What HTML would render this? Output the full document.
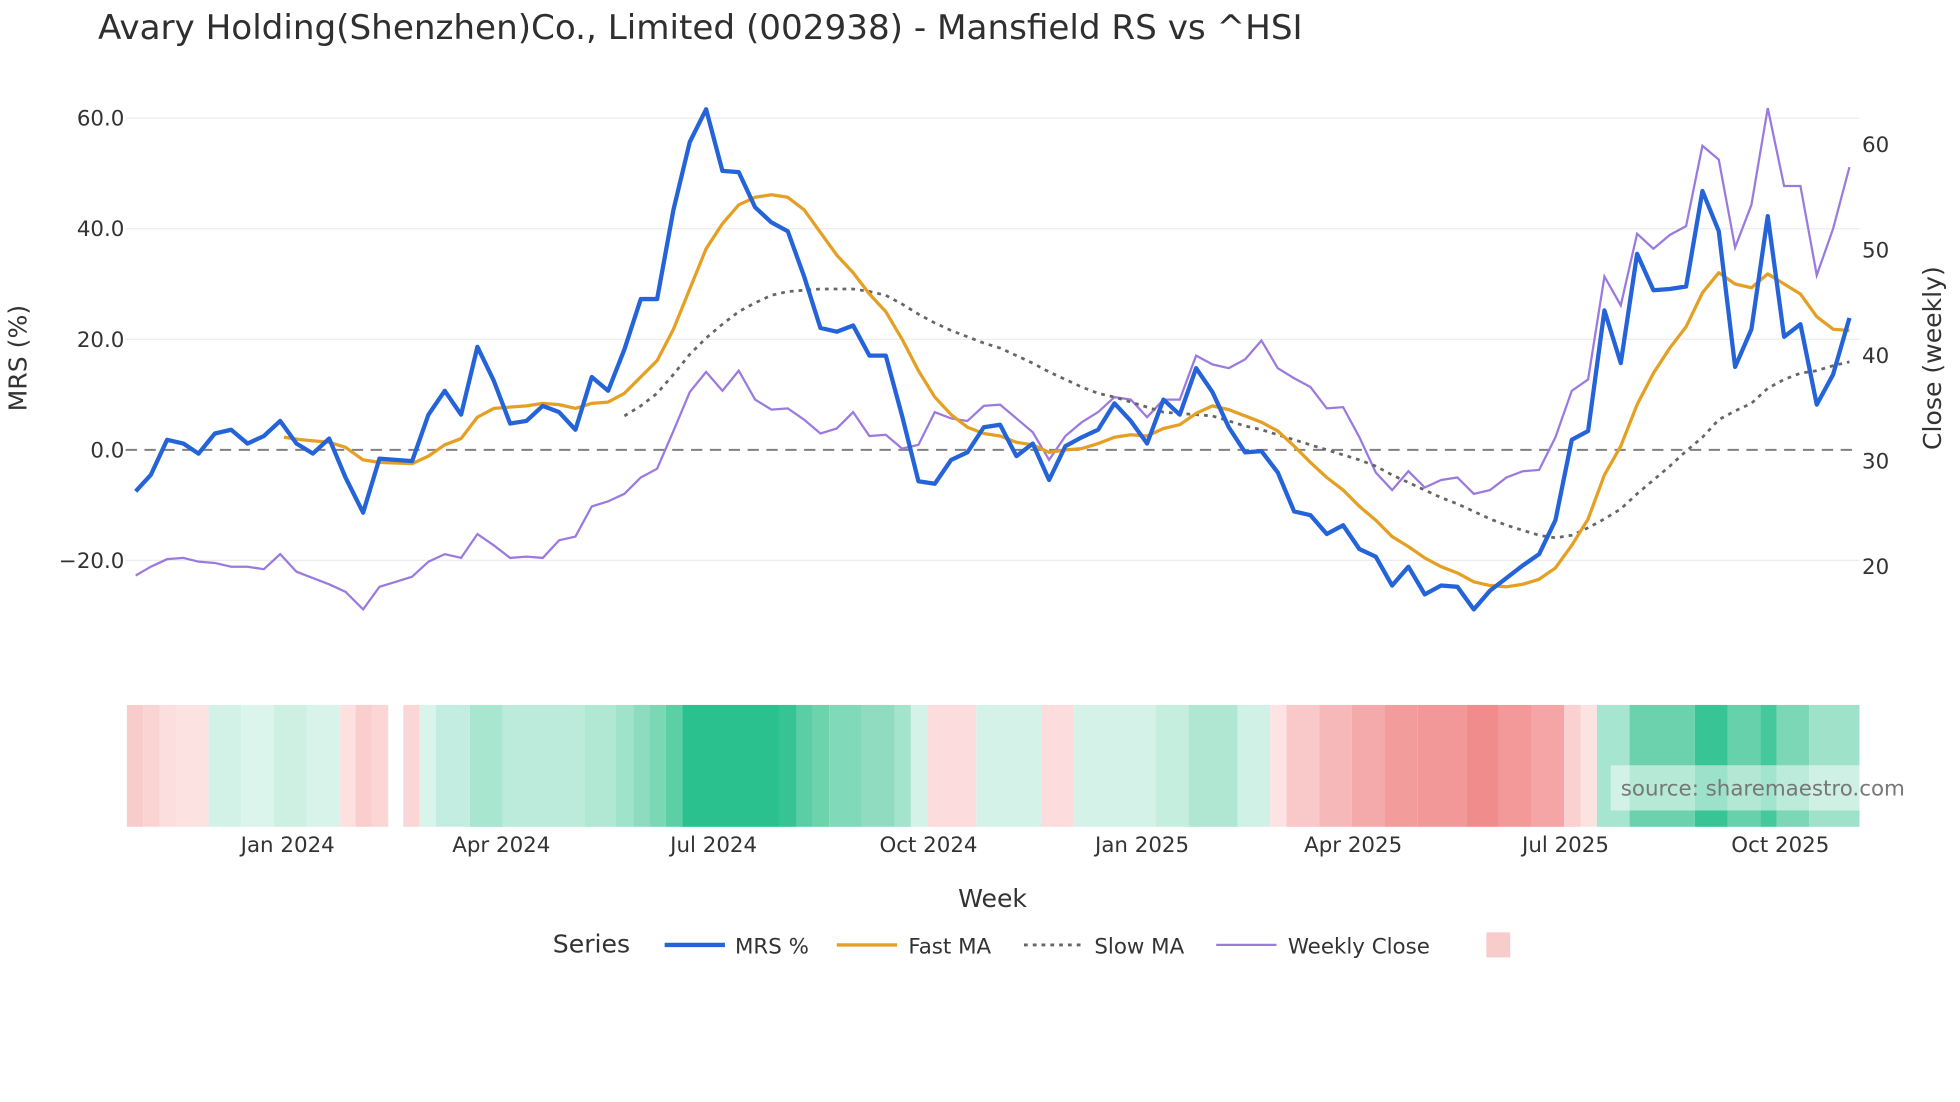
<!DOCTYPE html>
<html><head><meta charset="utf-8"><style>
html,body{margin:0;padding:0;background:#fff;}
svg{display:block;font-family:"DejaVu Sans","Liberation Sans",sans-serif;}
</style></head><body>
<svg width="1960" height="1102" viewBox="0 0 1560 877" preserveAspectRatio="none" xmlns="http://www.w3.org/2000/svg">
<rect width="1560" height="877" fill="#fff"/>
<text x="78" y="31" font-size="27.2" fill="#2f2f2f">Avary Holding(Shenzhen)Co., Limited (002938) - Mansfield RS vs ^HSI</text>
<g stroke="#ececec" stroke-width="1">
<line x1="100" x2="1480" y1="94" y2="94"/><line x1="100" x2="1480" y1="182" y2="182"/><line x1="100" x2="1480" y1="270" y2="270"/><line x1="100" x2="1480" y1="446" y2="446"/>
</g>
<line x1="100" x2="1480" y1="358" y2="358" stroke="#808080" stroke-width="1.6" stroke-dasharray="9,6"/>
<g font-size="17" fill="#333" text-anchor="end">
<text x="99" y="100">60.0</text><text x="99" y="188">40.0</text><text x="99" y="276">20.0</text><text x="99" y="364">0.0</text><text x="99" y="452">−20.0</text>
</g>
<g font-size="17" fill="#333">
<text x="1482" y="121">60</text><text x="1482" y="205">50</text><text x="1482" y="289">40</text><text x="1482" y="373">30</text><text x="1482" y="457">20</text>
</g>
<text transform="translate(21,285) rotate(-90)" font-size="20" fill="#333" text-anchor="middle">MRS (%)</text>
<text transform="translate(1545,285) rotate(-90)" font-size="20" fill="#333" text-anchor="middle">Close (weekly)</text>

<polyline fill="none" stroke="#9b7ae0" stroke-width="1.8" points="108,458 120,451 133,445 146,444 158,447 171,448 184,451 197,451 210,453 223,441 236,455 249,460 262,465 275,471 289,485 302,467 315,463 328,459 341,447 354,441 367,444 380,425 393,434 406,444 419,443 432,444 445,430 458,427 471,403 484,399 497,393 510,380 523,373 536,343 549,312 562,296 575,311 588,295 601,318 614,326 627,325 640,334 653,345 666,341 679,328 692,347 705,346 718,357 731,354 744,328 757,333 770,335 783,323 796,322 809,333 822,344 835,366 848,347 861,336 874,328 887,316 900,318 913,332 926,318 939,318 952,283 965,290 978,293 991,286 1004,271 1017,293 1030,301 1043,308 1056,325 1069,324 1082,348 1095,376 1108,390 1121,375 1134,388 1147,382 1160,380 1173,393 1186,390 1199,380 1212,375 1225,374 1238,348 1251,311 1264,302 1277,220 1290,243 1303,186 1316,198 1329,187 1342,180 1355,116 1368,127 1381,197 1394,163 1407,86 1420,148 1433,148 1446,219 1459,182 1472,133"/>
<polyline fill="none" stroke="#666" stroke-width="2.2" stroke-dasharray="3,4" points="497,331 510,323 523,313 536,298 549,282 562,269 575,258 588,248 601,241 614,235 627,232 640,231 653,230 666,230 679,230 692,232 705,235 718,242 731,250 744,257 757,263 770,268 783,273 796,277 809,283 822,289 835,296 848,302 861,308 874,313 887,316 900,320 913,324 926,328 939,329 952,330 965,331 978,335 991,339 1004,342 1017,346 1030,350 1043,354 1056,358 1069,362 1082,366 1095,371 1108,378 1121,384 1134,390 1147,396 1160,401 1173,407 1186,413 1199,418 1212,422 1225,426 1238,428 1251,426 1264,420 1277,413 1290,405 1303,393 1316,382 1329,371 1342,359 1355,348 1368,334 1381,327 1394,321 1407,309 1420,302 1433,297 1446,295 1459,291 1472,288"/>
<polyline fill="none" stroke="#e5a024" stroke-width="2.6" stroke-linejoin="round" points="226,348 240,350 262,352 275,356 289,366 302,368 328,369 341,363 354,354 367,349 380,332 393,325 419,323 432,321 445,322 458,325 471,321 484,320 497,313 510,300 523,287 536,262 549,230 562,198 575,178 588,163 601,157 614,155 627,157 640,167 653,185 666,203 679,217 692,234 705,248 718,270 731,295 744,316 757,330 770,340 783,345 796,347 809,352 822,354 835,360 848,358 861,357 874,353 887,348 900,346 913,347 926,341 939,338 952,329 965,323 978,326 991,331 1004,336 1017,343 1030,355 1043,368 1056,380 1069,390 1082,403 1095,414 1108,427 1121,435 1134,444 1147,451 1160,456 1173,463 1186,466 1199,467 1212,465 1225,461 1238,452 1251,434 1264,413 1277,378 1290,355 1303,322 1316,297 1329,277 1342,260 1355,233 1368,217 1381,226 1394,229 1407,218 1420,226 1433,234 1446,252 1459,262 1472,263"/>
<polyline fill="none" stroke="#2563d9" stroke-width="3.4" stroke-linejoin="round" points="108,391 120,378 133,350 146,353 158,361 171,345 184,342 197,353 210,347 223,335 236,353 249,361 262,349 275,380 289,408 302,365 315,366 328,367 341,330 354,311 367,330 380,276 393,303 406,337 419,335 432,323 445,328 458,342 471,300 484,311 497,278 510,238 523,238 536,167 549,113 562,87 575,136 588,137 601,165 614,177 627,184 640,220 653,261 666,264 679,259 692,283 705,283 718,331 731,383 744,385 757,366 770,360 783,340 796,338 809,363 822,353 835,382 848,355 861,348 874,342 887,321 900,335 913,353 926,318 939,330 952,293 965,312 978,340 991,360 1004,359 1017,376 1030,407 1043,410 1056,425 1069,418 1082,437 1095,443 1108,466 1121,451 1134,473 1147,466 1160,467 1173,485 1186,470 1199,460 1212,450 1225,441 1238,414 1251,350 1264,343 1277,247 1290,289 1303,202 1316,231 1329,230 1342,228 1355,152 1368,184 1381,292 1394,262 1407,172 1420,268 1433,258 1446,322 1459,298 1472,253"/>

<g>
<rect x="101" y="561" width="13" height="97" fill="#f9cccc"/>
<rect x="114" y="561" width="13" height="97" fill="#fad3d3"/>
<rect x="127" y="561" width="13" height="97" fill="#fcdede"/>
<rect x="140" y="561" width="26" height="97" fill="#fde2e2"/>
<rect x="166" y="561" width="26" height="97" fill="#d3f2e7"/>
<rect x="192" y="561" width="26" height="97" fill="#dcf5ec"/>
<rect x="218" y="561" width="26" height="97" fill="#cdf0e3"/>
<rect x="244" y="561" width="26" height="97" fill="#d8f3ea"/>
<rect x="270" y="561" width="13" height="97" fill="#fde0e0"/>
<rect x="283" y="561" width="13" height="97" fill="#fbcece"/>
<rect x="296" y="561" width="13" height="97" fill="#fcd5d5"/>
<rect x="321" y="561" width="13" height="97" fill="#fbd6d6"/>
<rect x="334" y="561" width="13" height="97" fill="#d9f4ea"/>
<rect x="347" y="561" width="27" height="97" fill="#c3ede0"/>
<rect x="374" y="561" width="26" height="97" fill="#a8e6d0"/>
<rect x="400" y="561" width="65" height="97" fill="#bdebdb"/>
<rect x="465" y="561" width="25" height="97" fill="#b0e8d3"/>
<rect x="490" y="561" width="14" height="97" fill="#a0e3cb"/>
<rect x="504" y="561" width="13" height="97" fill="#8ddcc0"/>
<rect x="517" y="561" width="13" height="97" fill="#7bd7b6"/>
<rect x="530" y="561" width="13" height="97" fill="#5ccfa5"/>
<rect x="543" y="561" width="77" height="97" fill="#2ac18e"/>
<rect x="620" y="561" width="14" height="97" fill="#36c494"/>
<rect x="634" y="561" width="13" height="97" fill="#5ccea6"/>
<rect x="647" y="561" width="13" height="97" fill="#6dd3ad"/>
<rect x="660" y="561" width="26" height="97" fill="#80d9b8"/>
<rect x="686" y="561" width="26" height="97" fill="#8fdcc0"/>
<rect x="712" y="561" width="13" height="97" fill="#a4e3cc"/>
<rect x="725" y="561" width="13" height="97" fill="#d5f2e8"/>
<rect x="738" y="561" width="39" height="97" fill="#fcdcdc"/>
<rect x="777" y="561" width="52" height="97" fill="#d5f2e8"/>
<rect x="829" y="561" width="26" height="97" fill="#fcdcdc"/>
<rect x="855" y="561" width="65" height="97" fill="#d5f2e8"/>
<rect x="920" y="561" width="26" height="97" fill="#c6eede"/>
<rect x="946" y="561" width="39" height="97" fill="#b0e7d3"/>
<rect x="985" y="561" width="26" height="97" fill="#d0f1e5"/>
<rect x="1011" y="561" width="13" height="97" fill="#fde3e3"/>
<rect x="1024" y="561" width="26" height="97" fill="#f9c8c8"/>
<rect x="1050" y="561" width="26" height="97" fill="#f6b8b8"/>
<rect x="1076" y="561" width="26" height="97" fill="#f4aaaa"/>
<rect x="1102" y="561" width="26" height="97" fill="#f29c9c"/>
<rect x="1128" y="561" width="39" height="97" fill="#f39898"/>
<rect x="1167" y="561" width="26" height="97" fill="#f08c8c"/>
<rect x="1193" y="561" width="26" height="97" fill="#f39999"/>
<rect x="1219" y="561" width="26" height="97" fill="#f5a5a5"/>
<rect x="1245" y="561" width="13" height="97" fill="#fad0d0"/>
<rect x="1258" y="561" width="13" height="97" fill="#fde2e2"/>
<rect x="1271" y="561" width="26" height="97" fill="#a6e5cf"/>
<rect x="1297" y="561" width="52" height="97" fill="#6cd2ad"/>
<rect x="1349" y="561" width="26" height="97" fill="#38c494"/>
<rect x="1375" y="561" width="26" height="97" fill="#66d1aa"/>
<rect x="1401" y="561" width="13" height="97" fill="#45c89c"/>
<rect x="1414" y="561" width="26" height="97" fill="#7bd7b6"/>
<rect x="1440" y="561" width="40" height="97" fill="#9fe2ca"/>
</g>
<rect x="1282" y="609" width="198" height="36" fill="#fff" fill-opacity="0.5"/>
<text x="1290" y="633" font-size="17" fill="#777">source: sharemaestro.com</text>

<g font-size="17" fill="#333" text-anchor="middle">
<text x="229" y="678">Jan 2024</text><text x="399" y="678">Apr 2024</text><text x="568" y="678">Jul 2024</text><text x="739" y="678">Oct 2024</text>
<text x="909" y="678">Jan 2025</text><text x="1077" y="678">Apr 2025</text><text x="1246" y="678">Jul 2025</text><text x="1417" y="678">Oct 2025</text>
</g>
<text x="790" y="722" font-size="20" fill="#333" text-anchor="middle">Week</text>
<text x="440" y="758" font-size="20" fill="#333">Series</text>
<line x1="529" x2="577" y1="752" y2="752" stroke="#2563d9" stroke-width="3.4"/>
<text x="585" y="759" font-size="17" fill="#333">MRS %</text>
<line x1="666" x2="714" y1="752" y2="752" stroke="#e5a024" stroke-width="2.6"/>
<text x="723" y="759" font-size="17" fill="#333">Fast MA</text>
<line x1="815" x2="860" y1="752" y2="752" stroke="#666" stroke-width="2.2" stroke-dasharray="3,4"/>
<text x="871" y="759" font-size="17" fill="#333">Slow MA</text>
<line x1="968" x2="1016" y1="752" y2="752" stroke="#9b7ae0" stroke-width="1.8"/>
<text x="1025" y="759" font-size="17" fill="#333">Weekly Close</text>
<rect x="1183" y="742" width="19" height="20" fill="#f9cccc"/>
</svg>
</body></html>
